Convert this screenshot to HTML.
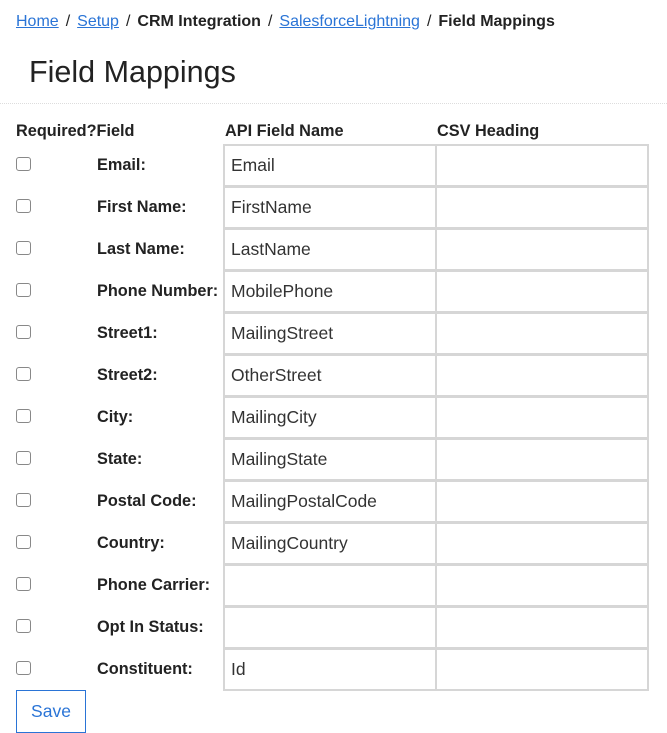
<!DOCTYPE html>
<html><head><meta charset="utf-8"><style>
*{box-sizing:border-box;margin:0;padding:0}
body{width:667px;height:733px;background:#fff;font-family:"Liberation Sans",sans-serif;color:#222;position:relative;overflow:hidden}
.a{position:absolute;white-space:nowrap}
.bc{top:13px;left:16px;font-size:16px;color:#222}
.bc a{color:#2a74d6;text-decoration:underline}
.bc b{font-weight:bold}
.bc .s{margin:0 7px}
h1{position:absolute;left:29px;top:55px;font-size:30.5px;font-weight:normal;color:#222}
.hr{position:absolute;left:0;right:0;top:103px;border-top:1px dotted #ddd}
.h{font-weight:bold;font-size:16.3px;top:122px}
.cb{position:absolute;left:16px;width:15px;height:14px;border:1px solid #888;border-radius:3px;background:#fff}
.lb{position:absolute;left:97px;font-weight:bold;font-size:16.3px}
.in{position:absolute;height:43px;border:2px solid #d6d6d6;font-size:17.5px;padding:9px 0 0 6px;color:#333}
.btn{position:absolute;left:16px;top:690px;width:70px;height:43px;border:1.5px solid #2a74d6;color:#2a74d6;font-size:17.5px;text-align:center;line-height:40px}
</style></head><body>
<div class="a bc"><a>Home</a><span class="s">/</span><a>Setup</a><span class="s">/</span><b>CRM Integration</b><span class="s">/</span><a>SalesforceLightning</a><span class="s">/</span><b>Field Mappings</b></div>
<h1>Field Mappings</h1>
<div class="hr"></div>
<div class="a h" style="left:16px">Required?Field</div>
<div class="a h" style="left:225px">API Field Name</div>
<div class="a h" style="left:437px">CSV Heading</div>
<div id="rows"></div>
<script>
var r=[["Email:","Email"],["First Name:","FirstName"],["Last Name:","LastName"],["Phone Number:","MobilePhone"],["Street1:","MailingStreet"],["Street2:","OtherStreet"],["City:","MailingCity"],["State:","MailingState"],["Postal Code:","MailingPostalCode"],["Country:","MailingCountry"],["Phone Carrier:",""],["Opt In Status:",""],["Constituent:","Id"]];
var h="";r.forEach(function(x,i){var t=144+42*i;
h+='<div class="cb" style="top:'+(t+13)+'px"></div><div class="lb" style="top:'+(t+12)+'px">'+x[0]+'</div><div class="in" style="left:223px;width:214px;top:'+t+'px">'+x[1]+'</div><div class="in" style="left:435px;width:214px;top:'+t+'px"></div>';});
document.getElementById("rows").innerHTML=h;
</script>
<div class="btn">Save</div>
</body></html>
